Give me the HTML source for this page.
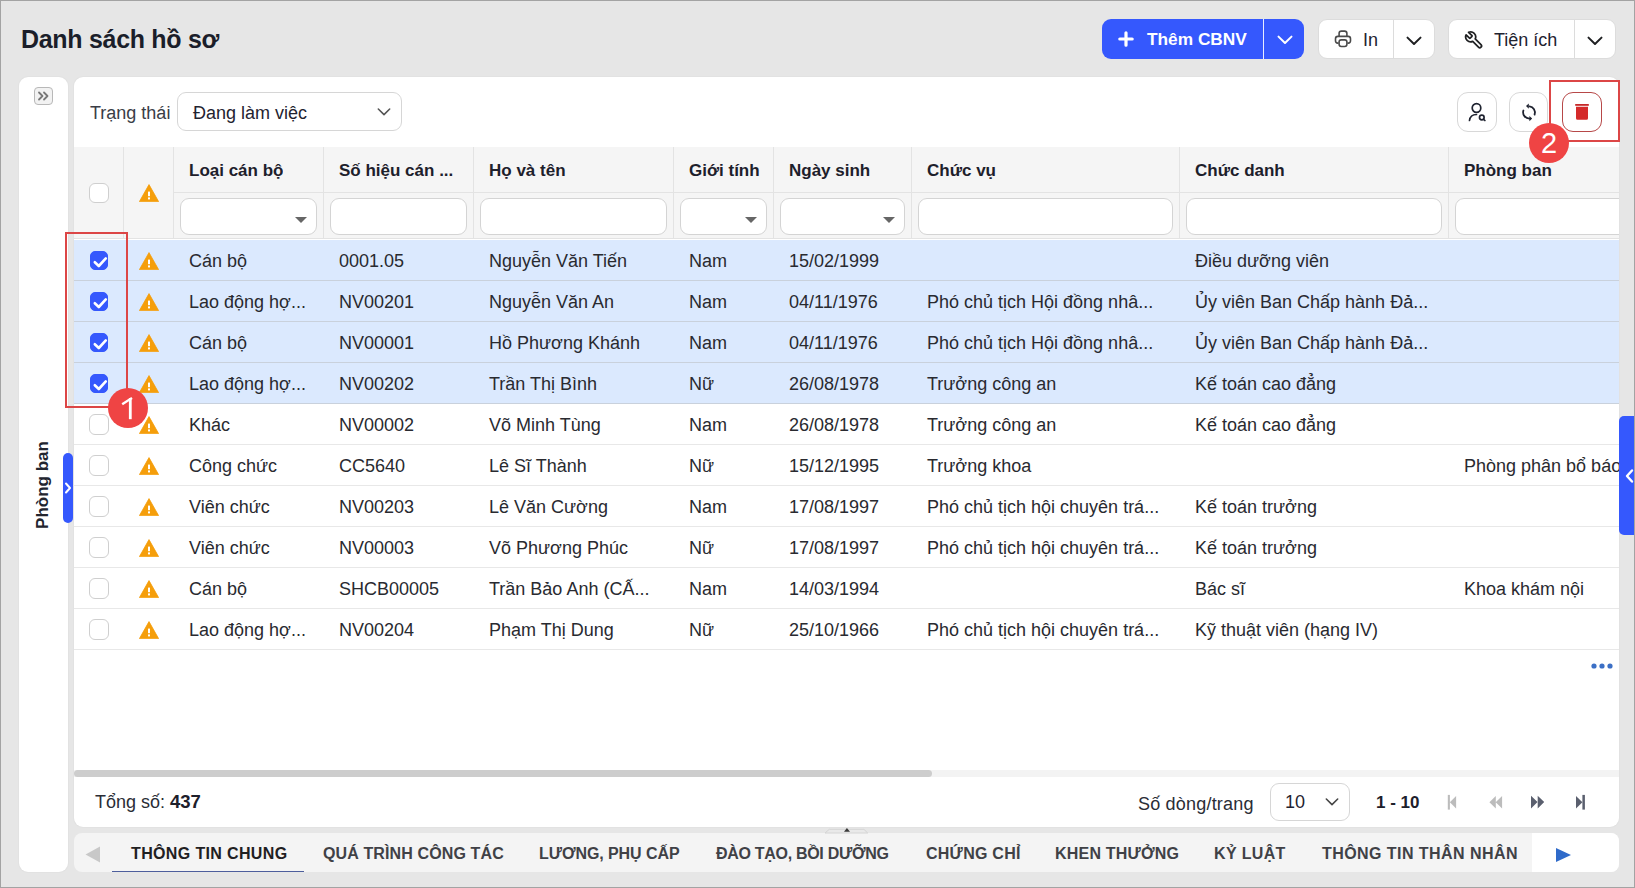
<!DOCTYPE html>
<html><head><meta charset="utf-8">
<style>
*{box-sizing:border-box;margin:0;padding:0}
html,body{width:1635px;height:888px;overflow:hidden;background:#e6e6e6}
body{font-family:"Liberation Sans",sans-serif;color:#1f2330;position:relative}
.abs{position:absolute}
#frame{position:absolute;left:0;top:0;width:1635px;height:888px;border:1px solid #a3a3a3;pointer-events:none;z-index:50}
.title{left:21px;top:23.3px;letter-spacing:-0.3px;font-size:25px;font-weight:700;color:#1b1e2a;line-height:32px;white-space:nowrap}
.btn{position:absolute;top:19px;height:40px;border-radius:9px}
.btn.blue{left:1102px;width:202px;background:#3558fd;color:#fff}
.btn.white{background:#fff;border:1px solid #dcdcdc;color:#1f2330}
.btn .t{position:absolute;top:0;line-height:40px;font-size:18px;white-space:nowrap}
.btn .dv{position:absolute;top:0;bottom:0;width:1px}
.sidebar{left:19px;top:77px;width:49px;height:795px;background:#fff;border-radius:9px;box-shadow:0 0 2px rgba(0,0,0,0.07)}
.main{left:74px;top:77px;width:1545px;height:750px;background:#fff;border-radius:9px;overflow:hidden;box-shadow:0 0 2px rgba(0,0,0,0.07)}
.tabs{left:74px;top:833px;width:1545px;height:39px;background:#f4f4f4;border-radius:8px;overflow:hidden}
.cell{position:absolute;white-space:nowrap;overflow:hidden}
.hd{background:#f5f5f5}
.ht{font-size:17px;font-weight:700;color:#1d202b;line-height:22px}
.fi{position:absolute;background:#fff;border:1px solid #d4d4d4;border-radius:9px}
.dd{position:absolute;width:0;height:0;border-left:6px solid transparent;border-right:6px solid transparent;border-top:6px solid #666}
.row{position:absolute;left:0;width:1545px;height:41px;border-bottom:1px solid #e8e8e8}
.row.sel{background:#dbe9fe;border-bottom-color:#c9d1dc}
.tx{position:absolute;top:0;line-height:42px;font-size:18px;color:#292a30;white-space:nowrap}
.cb{position:absolute;left:15px;top:10px;width:20px;height:21px;border-radius:6px;border:1px solid #cfcfcf;background:#fff}
.cb.on{left:16px;top:11px;width:18px;height:19px;border-radius:5px;background:#3558fd;border-color:#3558fd}
.warn{position:absolute;left:65px;top:12px}
.ibtn{position:absolute;top:15px;width:40px;height:40px;border:1px solid #d8d8d8;border-radius:11px;background:#fff}
.tab{position:absolute;top:0;line-height:41px;font-size:16px;font-weight:700;color:#404146;white-space:nowrap}
.badge{position:absolute;width:40px;height:40px;border-radius:50%;background:#ef4444;color:#fff;font-size:29px;line-height:40px;text-align:center;z-index:40}
.redbox{position:absolute;border:2px solid #dc4646;z-index:39}
</style></head>
<body>
<div id="frame"></div>
<div class="abs title">Danh sách hồ sơ</div>

<div class="btn blue">
 <svg class="abs" style="left:16px;top:12px" width="16" height="16" viewBox="0 0 16 16"><path d="M8 1.8V14.2M1.8 8H14.2" stroke="#fff" stroke-width="3.2" stroke-linecap="round"/></svg>
 <div class="t" style="left:45px;font-weight:700;font-size:17.3px">Thêm CBNV</div>
 <div class="dv" style="left:161px;background:#e8ecff"></div>
 <div class="abs" style="left:175px;top:13px"><svg width="16" height="16" viewBox="0 0 16 16"><path d="M1.5 4.6 L8 11 L14.5 4.6" fill="none" stroke="#fff" stroke-width="2" stroke-linecap="round" stroke-linejoin="round"/></svg></div>
</div>
<div class="btn white" style="left:1318px;width:117px">
 <svg class="abs" style="left:15px;top:10px" width="19" height="19" viewBox="0 0 19 19"><g fill="none" stroke="#4a4a4a" stroke-width="1.6" stroke-linejoin="round"><path d="M5.1 6.4V3.4a2.3 2.3 0 0 1 2.3-2.3h3.2a2.3 2.3 0 0 1 2.3 2.3V6.4"/><path d="M4.6 13.1H3.8a2.3 2.3 0 0 1-2.3-2.3V8.7a2.3 2.3 0 0 1 2.3-2.3h10.4a2.3 2.3 0 0 1 2.3 2.3v2.1a2.3 2.3 0 0 1-2.3 2.3h-.8"/><rect x="5.1" y="9.9" width="7.8" height="6.6" rx="2.2" fill="#fff"/></g></svg>
 <div class="t" style="left:44px">In</div>
 <div class="dv" style="left:74px;background:#dcdcdc"></div>
 <div class="abs" style="left:87px;top:13px"><svg width="16" height="16" viewBox="0 0 16 16"><path d="M1.5 4.6 L8 11 L14.5 4.6" fill="none" stroke="#1f2022" stroke-width="2" stroke-linecap="round" stroke-linejoin="round"/></svg></div>
</div>
<div class="btn white" style="left:1448px;width:168px">
 <svg class="abs" style="left:15px;top:9.5px" width="20"  height="20.4" viewBox="0 0 24 24"><g transform="translate(24,0) scale(-1,1)"><path d="M14.7 6.3a1 1 0 0 0 0 1.4l1.6 1.6a1 1 0 0 0 1.4 0l3.77-3.77a6 6 0 0 1-7.94 7.94l-6.91 6.91a2.12 2.12 0 0 1-3-3l6.91-6.91a6 6 0 0 1 7.94-7.94l-3.76 3.76z" fill="none" stroke="#1f2022" stroke-width="2.1" stroke-linejoin="round"/></g></svg>
 <div class="t" style="left:45px">Tiện ích</div>
 <div class="dv" style="left:125px;background:#dcdcdc"></div>
 <div class="abs" style="left:138px;top:13px"><svg width="16" height="16" viewBox="0 0 16 16"><path d="M1.5 4.6 L8 11 L14.5 4.6" fill="none" stroke="#1f2022" stroke-width="2" stroke-linecap="round" stroke-linejoin="round"/></svg></div>
</div>

<div class="abs sidebar">
 <div class="abs" style="left:15px;top:10px;width:19px;height:18px;border:1px solid #b8b8b8;border-radius:4px;background:#f2f2f2"></div>
 <svg class="abs" style="left:18px;top:13px" width="14" height="12" viewBox="0 0 14 12"><path d="M2 2.5L5.5 6L2 9.5M7 2.5L10.5 6L7 9.5" fill="none" stroke="#777" stroke-width="1.8" stroke-linecap="round" stroke-linejoin="round"/></svg>
 <div class="abs" style="left:-28px;top:398px;width:104px;height:20px;transform:rotate(-90deg);font-size:17px;font-weight:700;color:#22252f;line-height:20px;text-align:center;white-space:nowrap">Phòng ban</div>
</div>
<div class="abs" style="left:63px;top:453px;width:10px;height:70px;border-radius:5px;background:#3558fd;z-index:5">
 <svg class="abs" style="left:1px;top:28px" width="8" height="14" viewBox="0 0 8 14"><path d="M2 2.5L6 7L2 11.5" fill="none" stroke="#fff" stroke-width="2" stroke-linecap="round" stroke-linejoin="round"/></svg>
</div>

<div class="abs main">
<div class="tx" style="left:16px;top:15px;color:#3a3d46">Trạng thái</div>
<div class="abs" style="left:103px;top:15px;width:225px;height:39px;border:1px solid #d6d6d6;border-radius:9px;background:#fff">
 <div class="tx" style="left:15px;top:1px;line-height:39px;color:#1f2330">Đang làm việc</div>
 <div class="abs" style="left:199px;top:12px"><svg width="14" height="14" viewBox="0 0 16 16"><path d="M1.5 4.6 L8 11 L14.5 4.6" fill="none" stroke="#555" stroke-width="1.8" stroke-linecap="round" stroke-linejoin="round"/></svg></div>
</div>
<div class="ibtn" style="left:1383px">
 <svg class="abs" style="left:8.4px;top:7.8px" width="22" height="22" viewBox="0 0 22 22"><g fill="none" stroke="#1f2330" stroke-width="1.7" stroke-linecap="round"><circle cx="10.5" cy="7" r="4.3"/><path d="M3.5 19.5c0.5-4 3.5-6 7-6"/><circle cx="15.8" cy="16.5" r="2.3"/><path d="M17.6 18.3l1.3 1.2"/></g></svg>
</div>
<div class="ibtn" style="left:1435px;width:39px">
 <svg class="abs" style="left:9px;top:9px" width="20" height="20" viewBox="0 0 20 20"><g fill="none" stroke="#1f2330" stroke-width="1.8" stroke-linecap="round"><path d="M10.5 4.3A6.3 6.3 0 0 1 15.6 12.6"/><path d="M4.4 8.5A6.3 6.3 0 0 0 10.6 16.6"/></g><path d="M7 4.1L9.8 1.5V6.7z" fill="#1f2330"/><path d="M13.2 16.6L10.4 14V19.2z" fill="#1f2330"/></svg>
</div>
<div class="ibtn" style="left:1488px;border-color:#b74848">
 <svg class="abs" style="left:10.5px;top:9.5px" width="16" height="18" viewBox="0 0 16 18"><rect x="1.2" y="1" width="13.6" height="1.8" fill="#c62828"/><path d="M2 3.8h12v11.5a1.5 1.5 0 0 1-1.5 1.5h-9A1.5 1.5 0 0 1 2 15.3z" fill="#d42a2a"/></svg>
</div>

<div class="abs hd" style="left:0;top:70px;width:1545px;height:92px"></div>
<div class="abs" style="left:49px;top:70px;width:1px;height:92px;background:#e3e3e3"></div>
<div class="abs" style="left:99px;top:70px;width:1px;height:92px;background:#e3e3e3"></div>
<div class="abs" style="left:99px;top:115px;width:150px;height:1px;background:#e3e3e3"></div>
<div class="cell ht" style="left:115px;top:83px">Loại cán bộ</div>
<div class="fi" style="left:106px;top:121px;width:137px;height:37px"></div>
<div class="dd" style="left:221px;top:140px"></div>
<div class="abs" style="left:249px;top:70px;width:1px;height:92px;background:#e3e3e3"></div>
<div class="abs" style="left:249px;top:115px;width:150px;height:1px;background:#e3e3e3"></div>
<div class="cell ht" style="left:265px;top:83px">Số hiệu cán ...</div>
<div class="fi" style="left:256px;top:121px;width:137px;height:37px"></div>
<div class="abs" style="left:399px;top:70px;width:1px;height:92px;background:#e3e3e3"></div>
<div class="abs" style="left:399px;top:115px;width:200px;height:1px;background:#e3e3e3"></div>
<div class="cell ht" style="left:415px;top:83px">Họ và tên</div>
<div class="fi" style="left:406px;top:121px;width:187px;height:37px"></div>
<div class="abs" style="left:599px;top:70px;width:1px;height:92px;background:#e3e3e3"></div>
<div class="abs" style="left:599px;top:115px;width:100px;height:1px;background:#e3e3e3"></div>
<div class="cell ht" style="left:615px;top:83px">Giới tính</div>
<div class="fi" style="left:606px;top:121px;width:87px;height:37px"></div>
<div class="dd" style="left:671px;top:140px"></div>
<div class="abs" style="left:699px;top:70px;width:1px;height:92px;background:#e3e3e3"></div>
<div class="abs" style="left:699px;top:115px;width:138px;height:1px;background:#e3e3e3"></div>
<div class="cell ht" style="left:715px;top:83px">Ngày sinh</div>
<div class="fi" style="left:706px;top:121px;width:125px;height:37px"></div>
<div class="dd" style="left:809px;top:140px"></div>
<div class="abs" style="left:837px;top:70px;width:1px;height:92px;background:#e3e3e3"></div>
<div class="abs" style="left:837px;top:115px;width:268px;height:1px;background:#e3e3e3"></div>
<div class="cell ht" style="left:853px;top:83px">Chức vụ</div>
<div class="fi" style="left:844px;top:121px;width:255px;height:37px"></div>
<div class="abs" style="left:1105px;top:70px;width:1px;height:92px;background:#e3e3e3"></div>
<div class="abs" style="left:1105px;top:115px;width:269px;height:1px;background:#e3e3e3"></div>
<div class="cell ht" style="left:1121px;top:83px">Chức danh</div>
<div class="fi" style="left:1112px;top:121px;width:256px;height:37px"></div>
<div class="abs" style="left:1374px;top:70px;width:1px;height:92px;background:#e3e3e3"></div>
<div class="abs" style="left:1374px;top:115px;width:252px;height:1px;background:#e3e3e3"></div>
<div class="cell ht" style="left:1390px;top:83px">Phòng ban</div>
<div class="fi" style="left:1381px;top:121px;width:239px;height:37px"></div>
<div class="cb" style="left:15px;top:106px;width:20px;height:20px"></div>
<svg class="warn" style="top:107px" width="20" height="18" viewBox="0 0 20 18"><path d="M10 0.6 L19.6 17.6 L0.4 17.6 Z" fill="#f59e0b" stroke="#f59e0b" stroke-width="0.8" stroke-linejoin="round"/><rect x="9" y="7.6" width="2" height="4.6" fill="#fff"/><rect x="9" y="13.4" width="2" height="2" fill="#fff"/></svg>
<div class="abs" style="left:0;top:161px;width:1545px;height:1px;background:#e3e3e3"></div>
<div class="row sel" style="top:163px">
<div class="cb on"><svg style="position:absolute;left:-1px;top:-1px" width="18" height="19" viewBox="0 0 18 19"><path d="M4.8 11.2 L8.8 15 L15.8 7.4" fill="none" stroke="#fff" stroke-width="2.6" stroke-linecap="round" stroke-linejoin="round"/></svg></div>
<svg class="warn" width="20" height="18" viewBox="0 0 20 18"><path d="M10 0.6 L19.6 17.6 L0.4 17.6 Z" fill="#f59e0b" stroke="#f59e0b" stroke-width="0.8" stroke-linejoin="round"/><rect x="9" y="7.6" width="2" height="4.6" fill="#fff"/><rect x="9" y="13.4" width="2" height="2" fill="#fff"/></svg>
<div class="tx" style="left:115px">Cán bộ</div>
<div class="tx" style="left:265px">0001.05</div>
<div class="tx" style="left:415px">Nguyễn Văn Tiến</div>
<div class="tx" style="left:615px">Nam</div>
<div class="tx" style="left:715px">15/02/1999</div>
<div class="tx" style="left:1121px">Điều dưỡng viên</div>
</div>
<div class="row sel" style="top:204px">
<div class="cb on"><svg style="position:absolute;left:-1px;top:-1px" width="18" height="19" viewBox="0 0 18 19"><path d="M4.8 11.2 L8.8 15 L15.8 7.4" fill="none" stroke="#fff" stroke-width="2.6" stroke-linecap="round" stroke-linejoin="round"/></svg></div>
<svg class="warn" width="20" height="18" viewBox="0 0 20 18"><path d="M10 0.6 L19.6 17.6 L0.4 17.6 Z" fill="#f59e0b" stroke="#f59e0b" stroke-width="0.8" stroke-linejoin="round"/><rect x="9" y="7.6" width="2" height="4.6" fill="#fff"/><rect x="9" y="13.4" width="2" height="2" fill="#fff"/></svg>
<div class="tx" style="left:115px">Lao động hợ...</div>
<div class="tx" style="left:265px">NV00201</div>
<div class="tx" style="left:415px">Nguyễn Văn An</div>
<div class="tx" style="left:615px">Nam</div>
<div class="tx" style="left:715px">04/11/1976</div>
<div class="tx" style="left:853px">Phó chủ tịch Hội đồng nhâ...</div>
<div class="tx" style="left:1121px">Ủy viên Ban Chấp hành Đả...</div>
</div>
<div class="row sel" style="top:245px">
<div class="cb on"><svg style="position:absolute;left:-1px;top:-1px" width="18" height="19" viewBox="0 0 18 19"><path d="M4.8 11.2 L8.8 15 L15.8 7.4" fill="none" stroke="#fff" stroke-width="2.6" stroke-linecap="round" stroke-linejoin="round"/></svg></div>
<svg class="warn" width="20" height="18" viewBox="0 0 20 18"><path d="M10 0.6 L19.6 17.6 L0.4 17.6 Z" fill="#f59e0b" stroke="#f59e0b" stroke-width="0.8" stroke-linejoin="round"/><rect x="9" y="7.6" width="2" height="4.6" fill="#fff"/><rect x="9" y="13.4" width="2" height="2" fill="#fff"/></svg>
<div class="tx" style="left:115px">Cán bộ</div>
<div class="tx" style="left:265px">NV00001</div>
<div class="tx" style="left:415px">Hồ Phương Khánh</div>
<div class="tx" style="left:615px">Nam</div>
<div class="tx" style="left:715px">04/11/1976</div>
<div class="tx" style="left:853px">Phó chủ tịch Hội đồng nhâ...</div>
<div class="tx" style="left:1121px">Ủy viên Ban Chấp hành Đả...</div>
</div>
<div class="row sel" style="top:286px">
<div class="cb on"><svg style="position:absolute;left:-1px;top:-1px" width="18" height="19" viewBox="0 0 18 19"><path d="M4.8 11.2 L8.8 15 L15.8 7.4" fill="none" stroke="#fff" stroke-width="2.6" stroke-linecap="round" stroke-linejoin="round"/></svg></div>
<svg class="warn" width="20" height="18" viewBox="0 0 20 18"><path d="M10 0.6 L19.6 17.6 L0.4 17.6 Z" fill="#f59e0b" stroke="#f59e0b" stroke-width="0.8" stroke-linejoin="round"/><rect x="9" y="7.6" width="2" height="4.6" fill="#fff"/><rect x="9" y="13.4" width="2" height="2" fill="#fff"/></svg>
<div class="tx" style="left:115px">Lao động hợ...</div>
<div class="tx" style="left:265px">NV00202</div>
<div class="tx" style="left:415px">Trần Thị Bình</div>
<div class="tx" style="left:615px">Nữ</div>
<div class="tx" style="left:715px">26/08/1978</div>
<div class="tx" style="left:853px">Trưởng công an</div>
<div class="tx" style="left:1121px">Kế toán cao đẳng</div>
</div>
<div class="row" style="top:327px">
<div class="cb"></div>
<svg class="warn" width="20" height="18" viewBox="0 0 20 18"><path d="M10 0.6 L19.6 17.6 L0.4 17.6 Z" fill="#f59e0b" stroke="#f59e0b" stroke-width="0.8" stroke-linejoin="round"/><rect x="9" y="7.6" width="2" height="4.6" fill="#fff"/><rect x="9" y="13.4" width="2" height="2" fill="#fff"/></svg>
<div class="tx" style="left:115px">Khác</div>
<div class="tx" style="left:265px">NV00002</div>
<div class="tx" style="left:415px">Võ Minh Tùng</div>
<div class="tx" style="left:615px">Nam</div>
<div class="tx" style="left:715px">26/08/1978</div>
<div class="tx" style="left:853px">Trưởng công an</div>
<div class="tx" style="left:1121px">Kế toán cao đẳng</div>
</div>
<div class="row" style="top:368px">
<div class="cb"></div>
<svg class="warn" width="20" height="18" viewBox="0 0 20 18"><path d="M10 0.6 L19.6 17.6 L0.4 17.6 Z" fill="#f59e0b" stroke="#f59e0b" stroke-width="0.8" stroke-linejoin="round"/><rect x="9" y="7.6" width="2" height="4.6" fill="#fff"/><rect x="9" y="13.4" width="2" height="2" fill="#fff"/></svg>
<div class="tx" style="left:115px">Công chức</div>
<div class="tx" style="left:265px">CC5640</div>
<div class="tx" style="left:415px">Lê Sĩ Thành</div>
<div class="tx" style="left:615px">Nữ</div>
<div class="tx" style="left:715px">15/12/1995</div>
<div class="tx" style="left:853px">Trưởng khoa</div>
<div class="tx" style="left:1390px">Phòng phân bổ báo cáo</div>
</div>
<div class="row" style="top:409px">
<div class="cb"></div>
<svg class="warn" width="20" height="18" viewBox="0 0 20 18"><path d="M10 0.6 L19.6 17.6 L0.4 17.6 Z" fill="#f59e0b" stroke="#f59e0b" stroke-width="0.8" stroke-linejoin="round"/><rect x="9" y="7.6" width="2" height="4.6" fill="#fff"/><rect x="9" y="13.4" width="2" height="2" fill="#fff"/></svg>
<div class="tx" style="left:115px">Viên chức</div>
<div class="tx" style="left:265px">NV00203</div>
<div class="tx" style="left:415px">Lê Văn Cường</div>
<div class="tx" style="left:615px">Nam</div>
<div class="tx" style="left:715px">17/08/1997</div>
<div class="tx" style="left:853px">Phó chủ tịch hội chuyên trá...</div>
<div class="tx" style="left:1121px">Kế toán trưởng</div>
</div>
<div class="row" style="top:450px">
<div class="cb"></div>
<svg class="warn" width="20" height="18" viewBox="0 0 20 18"><path d="M10 0.6 L19.6 17.6 L0.4 17.6 Z" fill="#f59e0b" stroke="#f59e0b" stroke-width="0.8" stroke-linejoin="round"/><rect x="9" y="7.6" width="2" height="4.6" fill="#fff"/><rect x="9" y="13.4" width="2" height="2" fill="#fff"/></svg>
<div class="tx" style="left:115px">Viên chức</div>
<div class="tx" style="left:265px">NV00003</div>
<div class="tx" style="left:415px">Võ Phương Phúc</div>
<div class="tx" style="left:615px">Nữ</div>
<div class="tx" style="left:715px">17/08/1997</div>
<div class="tx" style="left:853px">Phó chủ tịch hội chuyên trá...</div>
<div class="tx" style="left:1121px">Kế toán trưởng</div>
</div>
<div class="row" style="top:491px">
<div class="cb"></div>
<svg class="warn" width="20" height="18" viewBox="0 0 20 18"><path d="M10 0.6 L19.6 17.6 L0.4 17.6 Z" fill="#f59e0b" stroke="#f59e0b" stroke-width="0.8" stroke-linejoin="round"/><rect x="9" y="7.6" width="2" height="4.6" fill="#fff"/><rect x="9" y="13.4" width="2" height="2" fill="#fff"/></svg>
<div class="tx" style="left:115px">Cán bộ</div>
<div class="tx" style="left:265px">SHCB00005</div>
<div class="tx" style="left:415px">Trần Bảo Anh (CẤ...</div>
<div class="tx" style="left:615px">Nam</div>
<div class="tx" style="left:715px">14/03/1994</div>
<div class="tx" style="left:1121px">Bác sĩ</div>
<div class="tx" style="left:1390px">Khoa khám nội</div>
</div>
<div class="row" style="top:532px">
<div class="cb"></div>
<svg class="warn" width="20" height="18" viewBox="0 0 20 18"><path d="M10 0.6 L19.6 17.6 L0.4 17.6 Z" fill="#f59e0b" stroke="#f59e0b" stroke-width="0.8" stroke-linejoin="round"/><rect x="9" y="7.6" width="2" height="4.6" fill="#fff"/><rect x="9" y="13.4" width="2" height="2" fill="#fff"/></svg>
<div class="tx" style="left:115px">Lao động hợ...</div>
<div class="tx" style="left:265px">NV00204</div>
<div class="tx" style="left:415px">Phạm Thị Dung</div>
<div class="tx" style="left:615px">Nữ</div>
<div class="tx" style="left:715px">25/10/1966</div>
<div class="tx" style="left:853px">Phó chủ tịch hội chuyên trá...</div>
<div class="tx" style="left:1121px">Kỹ thuật viên (hạng IV)</div>
</div>
<svg class="abs" style="left:1517px;top:586px" width="22" height="6" viewBox="0 0 22 6"><circle cx="3" cy="3" r="2.6" fill="#3b6fc5"/><circle cx="11" cy="3" r="2.6" fill="#3b6fc5"/><circle cx="19" cy="3" r="2.6" fill="#3b6fc5"/></svg>
<div class="abs" style="left:0;top:693px;width:1545px;height:7px;background:#f3f3f3"></div>
<div class="abs" style="left:0;top:693px;width:858px;height:7px;background:#cdcdcd;border-radius:4px"></div>
<div class="tx" style="left:21px;top:704px;line-height:42px;color:#2a2d36">Tổng số: <b style="color:#1d202b;font-size:18.5px">437</b></div>
<div class="tx" style="left:1064px;top:706px;line-height:42px;letter-spacing:0.2px;color:#2a2d36">Số dòng/trang</div>
<div class="abs" style="left:1196px;top:706px;width:80px;height:38px;border:1px solid #d6d6d6;border-radius:9px">
 <div class="tx" style="left:14px;line-height:36px;color:#1f2330">10</div>
 <div class="abs" style="left:54px;top:11px"><svg width="14" height="14" viewBox="0 0 16 16"><path d="M1.5 4.6 L8 11 L14.5 4.6" fill="none" stroke="#444" stroke-width="1.8" stroke-linecap="round" stroke-linejoin="round"/></svg></div>
</div>
<div class="tx" style="left:1302px;top:705px;line-height:42px;font-size:17px;font-weight:700;color:#1d202b">1 - 10</div>
<svg class="abs" style="left:1373px;top:717px" width="16" height="16" viewBox="0 0 16 16"><rect x="0.8" y="0.9" width="2.1" height="14.7" fill="#bcbcbc"/><path d="M2.9 8.2L9.1 1.9V14.6z" fill="#bcbcbc"/></svg>
<svg class="abs" style="left:1415px;top:717px" width="16" height="16" viewBox="0 0 16 16"><path d="M0.4 8.2L6.8 1.9V14.6z M6.7 8.2L13.1 1.9V14.6z" fill="#bcbcbc"/></svg>
<svg class="abs" style="left:1457px;top:717px" width="16" height="16" viewBox="0 0 16 16"><path d="M0 1.7L6.5 8.1L0 14.5z M6.7 1.7L13.2 8.1L6.7 14.5z" fill="#5a5f6e"/></svg>
<svg class="abs" style="left:1501px;top:717px" width="16" height="16" viewBox="0 0 16 16"><path d="M1 1.9L7.4 8.2L1 14.6z" fill="#5a5f6e"/><rect x="7.4" y="0.9" width="2.5" height="14.7" fill="#5a5f6e"/></svg>

</div>
<div class="abs" style="left:1619px;top:416px;width:16px;height:119px;border-radius:5px 0 0 5px;background:#3558fd;z-index:5"><svg class="abs" style="left:5px;top:52px" width="10" height="16" viewBox="0 0 10 16"><path d="M8 2.5L3 8L8 13.5" fill="none" stroke="#fff" stroke-width="2.4" stroke-linecap="round" stroke-linejoin="round"/></svg></div>
<svg class="abs" style="left:820px;top:824px;z-index:3" width="52" height="10" viewBox="0 0 52 10"><path d="M5 9L9.3 5.3H43.9L47.7 9z" fill="#e9e9e9" stroke="#d4d4d4" stroke-width="1"/><path d="M24 7.8L26.9 4L30 7.8z" fill="#3a3a3a"/></svg>
<div class="abs tabs">
<svg class="abs" style="left:11px;top:13px" width="16" height="17" viewBox="0 0 16 17"><path d="M15 0.5V16.5L0.5 8.5z" fill="#c8c8c8"/></svg>
<div class="tab" style="left:57px;letter-spacing:0.36px;color:#1f2022">THÔNG TIN CHUNG</div>
<div class="tab" style="left:249px;letter-spacing:0.12px;">QUÁ TRÌNH CÔNG TÁC</div>
<div class="tab" style="left:465px;letter-spacing:-0.08px;">LƯƠNG, PHỤ CẤP</div>
<div class="tab" style="left:642px;letter-spacing:-0.3px;">ĐÀO TẠO, BỒI DƯỠNG</div>
<div class="tab" style="left:852px;letter-spacing:0.25px;">CHỨNG CHỈ</div>
<div class="tab" style="left:981px;letter-spacing:0.2px;">KHEN THƯỞNG</div>
<div class="tab" style="left:1140px;letter-spacing:0.33px;">KỶ LUẬT</div>
<div class="tab" style="left:1248px;letter-spacing:0.44px;">THÔNG TIN THÂN NHÂN</div>
<div class="abs" style="left:38px;top:38px;width:192px;height:1px;background:#4d5e9c"></div>
<div class="abs" style="left:1458px;top:0;width:87px;height:39px;background:#fff"></div>
<svg class="abs" style="left:1481px;top:14px" width="17" height="16" viewBox="0 0 17 16"><path d="M1 1V15L16 8z" fill="#2f6bca"/></svg>
</div>
<div class="redbox" style="left:65px;top:232px;width:63px;height:176px"></div>
<div class="badge" style="left:108px;top:388px"><svg style="position:absolute;left:0;top:0" width="40" height="40" viewBox="0 0 40 40"><path d="M22.3 10V31.2" stroke="#fff" stroke-width="2.8"/><path d="M23 10.6L15.2 15.6" stroke="#fff" stroke-width="2.4" stroke-linecap="square"/></svg></div>
<div class="redbox" style="left:1549px;top:80px;width:71px;height:62px"></div>
<div class="badge" style="left:1529px;top:123px">2</div>
</body></html>
